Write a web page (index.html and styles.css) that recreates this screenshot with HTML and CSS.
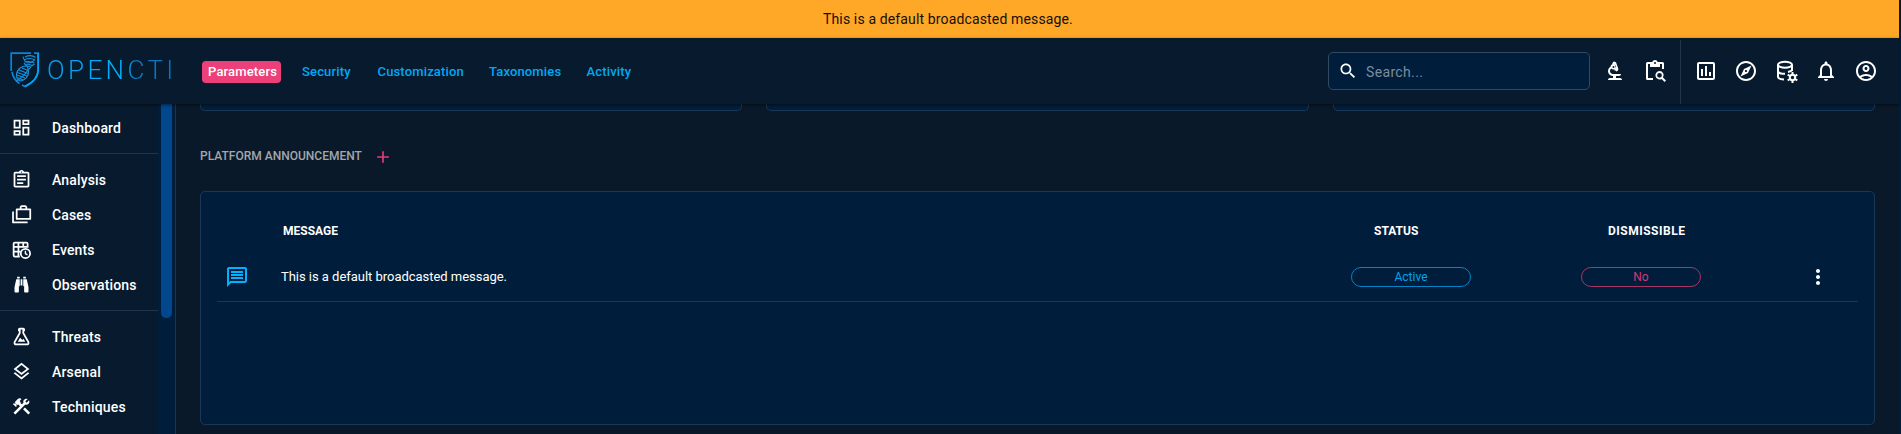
FILE: index.html
```html
<!DOCTYPE html>
<html lang="en">
<head>
<meta charset="utf-8">
<title>OpenCTI - Parameters</title>
<link rel="stylesheet" href="styles.css">
</head>
<body>
<div class="app">
  <div class="banner"><span>This is a default broadcasted message.</span></div>
  <header class="topbar">
    <div class="logo">
      <svg class="logo-mark" width="30" height="36" viewBox="0 0 30 36" fill="none">
        <path d="M21 1.2H1.2V19M2 20c1 5.500 3.500 9 7.500 11.500M12 33l3 1.500c8-4 13.200-8.500 13.200-17V1.200H24" stroke="#0a85d6" stroke-width="1.700"/>
        <path d="M28.200 1.200V17.500c0 8-5 13-13.200 17" stroke="#00a5f5" stroke-width="1.700"/>
        <path d="M15 5c4-2 8-1.500 10.500.5M14.500 7.500c4-1.500 8-1 10.500.5M14.500 10c3.500-1 7-.5 10 1M15 12.500c2.500-.5 5 0 7 1M13 4.500c1.500 7 8 8.500 12 2.500M14 11c3 5 7 4 10.500 1" stroke="#1592dd" stroke-width="1.100"/>
        <path d="M17 14c-5-.5-10 3-10.500 8.500-.3 4 1.500 6 4.500 6.500 4-1 8-5 7.500-9.500-.2-2-.7-4-1.500-5.500z" stroke="#1592dd" stroke-width="1.100"/>
        <path d="M9 18l9 3.500M7.500 20.500l9.500 3.500M7 23l8 3M7.500 25.500l5.500 2.500M12 16l6 2.500M6 29c3-1 4-3 7-5s4-6 8-9" stroke="#1592dd" stroke-width="1.100"/>
      </svg>
      <span class="logo-text">OPENCTI</span>
    </div>
    <nav class="tabs">
      <a class="tab tab-active">Parameters</a>
      <a class="tab t-sec">Security</a>
      <a class="tab t-cus">Customization</a>
      <a class="tab t-tax">Taxonomies</a>
      <a class="tab t-act">Activity</a>
    </nav>
    <div class="search">
      <svg class="i20" viewBox="0 0 24 24"><path d="M15.500 14h-.79l-.28-.27C15.410 12.590 16 11.110 16 9.500 16 5.910 13.090 3 9.500 3S3 5.910 3 9.500 5.910 16 9.500 16c1.610 0 3.090-.59 4.230-1.570l.27.28v.79l5 4.990L20.490 19l-4.990-5zm-6 0C7.010 14 5 11.990 5 9.500S7.010 5 9.500 5 14 7.010 14 9.500 11.990 14 9.500 14z"/></svg>
      <span>Search...</span>
    </div>
    <div class="tools">
      <svg class="i24" viewBox="0 0 24 24"><path d="M5 21c0-1.100.9-2 2-2h3v-2c-2.760 0-5-2.240-5-5 0-2.080 1.280-3.870 3.090-4.620C8.040 7.580 8 7.790 8 8c0 .54.17 1.030.46 1.440C7.590 9.960 7 10.910 7 12c0 1.660 1.340 3 3 3h8c0 1.100-.9 2-2 2h-3v2h4c1.100 0 2 .9 2 2z"/><path fill-rule="evenodd" d="M9.400 5.300 9.100 4.400l.9-.4-.3-.9 1.900-.7.3.9 1-.3 2.700 7.500-.9.300.3.900-1.900.7-.3-.9-1 .3-.6-1.600A2.500 2.500 0 1 1 9.400 5.300zM12.700 9.300l.500.300-1.500-4-.5.200A2.500 2.500 0 0 1 12.700 9.300zM10.500 7a1 1 0 1 0 0 2 1 1 0 0 0 0-2z"/></svg>
      <svg class="i24" viewBox="0 0 24 24"><path d="M10 21H4.500A1.500 1.500 0 0 1 3 19.500v-15A1.500 1.500 0 0 1 4.500 3h4.700a3 3 0 0 1 5.600 0h4.700A1.500 1.500 0 0 1 21 4.500V10h-2V5h-2v3H7V5H5v14h5zM12 3a1 1 0 1 0 0 2 1 1 0 0 0 0-2z"/><path d="M16.500 12a4.200 4.200 0 0 1 3.500 6.500l3 3-1.400 1.400-3-3A4.200 4.200 0 1 1 16.500 12zm0 1.900a2.400 2.400 0 1 0 0 4.800 2.400 2.400 0 0 0 0-4.800z"/></svg>
    </div>
    <div class="tools tools-main">
      <svg class="i24" viewBox="0 0 24 24"><path d="M9 17H7v-7h2v7zm4 0h-2V7h2v10zm4 0h-2v-4h2v4zm2 2H5V5h14v14zm0-16H5c-1.100 0-2 .9-2 2v14c0 1.100.9 2 2 2h14c1.100 0 2-.9 2-2V5c0-1.100-.9-2-2-2z"/></svg>
      <svg class="i24" viewBox="0 0 24 24"><path d="M12 2C6.480 2 2 6.480 2 12s4.480 10 10 10 10-4.480 10-10S17.520 2 12 2zm0 18c-4.410 0-8-3.590-8-8s3.590-8 8-8 8 3.590 8 8-3.590 8-8 8zm-5.500-2.500l7.510-3.490L17.500 6.500 9.990 9.990 6.500 17.500zm5.500-6.600c.61 0 1.100.49 1.100 1.100s-.49 1.100-1.100 1.100-1.100-.49-1.100-1.100.49-1.100 1.100-1.100z"/></svg>
      <svg class="i24" viewBox="0 0 24 24"><g fill="none" stroke="currentColor" stroke-width="2"><ellipse cx="11" cy="5.700" rx="7" ry="3"/><path d="M4 5.700v11.800c0 1.600 2.500 2.900 6 3M18 5.700V12M4 11.800c0 1.700 3 3 7 3M18 11c-.5 1-2 1.600-4 1.900"/><circle cx="18.500" cy="18.500" r="2.700"/><path d="M18.500 13v2.500M18.500 21.500V24M13.700 15.700l2.200 1.300M21.100 20l2.200 1.300M13.700 21.300l2.200-1.300M21.100 17l2.200-1.300"/></g></svg>
      <svg class="i24" viewBox="0 0 24 24"><path d="M12 22c1.100 0 2-.9 2-2h-4c0 1.100.9 2 2 2zm6-6v-5c0-3.070-1.630-5.640-4.500-6.320V4c0-.83-.67-1.500-1.500-1.500s-1.500.67-1.500 1.500v.68C7.640 5.360 6 7.920 6 11v5l-2 2v1h16v-1l-2-2zm-2 1H8v-6c0-2.480 1.510-4.500 4-4.500s4 2.020 4 4.500v6z"/></svg>
      <svg class="i24" viewBox="0 0 24 24"><path d="M12 2C6.480 2 2 6.480 2 12s4.480 10 10 10 10-4.480 10-10S17.520 2 12 2zM7.350 18.500C8.660 17.560 10.260 17 12 17s3.340.56 4.650 1.500c-1.310.94-2.910 1.500-4.650 1.500s-3.340-.56-4.650-1.500zm10.790-1.380C16.450 15.800 14.320 15 12 15s-4.450.8-6.140 2.120C4.700 15.730 4 13.950 4 12c0-4.420 3.580-8 8-8s8 3.580 8 8c0 1.950-.7 3.730-1.860 5.120z"/><path d="M12 6c-1.930 0-3.500 1.570-3.500 3.500S10.070 13 12 13s3.500-1.570 3.500-3.500S13.930 6 12 6zm0 5c-.83 0-1.500-.67-1.500-1.500S11.170 8 12 8s1.500.67 1.500 1.500S12.830 11 12 11z"/></svg>
    </div>
  </header>
  <div class="body">
    <aside class="sidebar">
      <div class="menu">
        <ul class="group">
          <li><svg class="i21" viewBox="0 0 24 24"><path d="M19 5v2h-4V5h4M9 5v6H5V5h4m10 8v6h-4v-6h4M9 17v2H5v-2h4M21 3h-8v6h8V3zM11 3H3v10h8V3zm10 8h-8v10h8V11zm-10 4H3v6h8v-6z"/></svg><span>Dashboard</span></li>
        </ul>
        <ul class="group">
          <li><svg class="i21" viewBox="0 0 24 24"><path d="M7 15h7v2H7zm0-4h10v2H7zm0-4h10v2H7zm12-4h-4.180C14.400 1.840 13.300 1 12 1c-1.300 0-2.400.84-2.820 2H5c-1.100 0-2 .9-2 2v14c0 1.100.9 2 2 2h14c1.100 0 2-.9 2-2V5c0-1.100-.9-2-2-2zm-7-.25c.41 0 .75.34.75.75s-.34.75-.75.75-.75-.34-.75-.75.34-.75.75-.75zM19 19H5V5h14v14z"/></svg><span>Analysis</span></li>
          <li><svg class="i21" viewBox="0 0 24 24"><g fill="none" stroke="currentColor" stroke-width="2" stroke-linejoin="round"><path d="M6.500 6H22v11H6.500zM11 6V3.500L12 2.500h4.500l1 1V6M2.300 8.500V21H19"/></g></svg><span>Cases</span></li>
          <li><svg class="i21" viewBox="0 0 24 24"><g fill="none" stroke="currentColor" stroke-width="2"><path d="M10 20H4.500A1.500 1.500 0 0 1 3 18.500v-13A1.500 1.500 0 0 1 4.500 4h13A1.500 1.500 0 0 1 19 5.500V10M3 9h16M3 14.500h8M8.500 4v16M14 4v6"/><circle cx="16.500" cy="16.500" r="5.300"/><path d="M16.500 13.500v3.300l2.300 1.400" stroke-width="1.600"/></g></svg><span>Events</span></li>
          <li><svg class="i21" viewBox="0 0 24 24"><path d="M11,6H13V13H11V6M9,20A1,1 0 0,1 8,21H5A1,1 0 0,1 4,20V15L6,6H10V13A1,1 0 0,1 9,14V20M10,5H7V3H10V5M15,20V14A1,1 0 0,1 14,13V6H18L20,15V20A1,1 0 0,1 19,21H16A1,1 0 0,1 15,20M14,5V3H17V5H14Z"/></svg><span>Observations</span></li>
        </ul>
        <ul class="group">
          <li><svg class="i21" viewBox="0 0 24 24"><path d="M5,19A1,1 0 0,0 6,20H18A1,1 0 0,0 19,19C19,18.790 18.930,18.590 18.820,18.430L13,8.350V4H11V8.350L5.180,18.430C5.070,18.590 5,18.790 5,19M6,22A3,3 0 0,1 3,19C3,18.400 3.180,17.840 3.500,17.370L9,7.810V6A1,1 0 0,1 8,5V4A2,2 0 0,1 10,2H14A2,2 0 0,1 16,4V5A1,1 0 0,1 15,6V7.810L20.500,17.370C20.820,17.840 21,18.400 21,19A3,3 0 0,1 18,22H6M13,16L14.340,14.660L16.270,18H7.730L10.390,13.390L13,16Z"/></svg><span>Threats</span></li>
          <li><svg class="i21" viewBox="0 0 24 24"><path d="M12,18.540L19.370,12.800L21,14.070L12,21.070L3,14.070L4.620,12.810L12,18.540M12,16L3,9L12,2L21,9L12,16M12,4.530L6.260,9L12,13.470L17.740,9L12,4.530Z"/></svg><span>Arsenal</span></li>
          <li><svg class="i21" viewBox="0 0 24 24"><path d="m13.780 15.170 2.120-2.120 6 6-2.120 2.120zM17.500 10c1.930 0 3.500-1.570 3.500-3.500 0-.58-.16-1.120-.41-1.600l-2.700 2.700-1.490-1.490 2.700-2.700c-.48-.25-1.020-.41-1.600-.41C15.570 3 14 4.570 14 6.500c0 .41.080.8.210 1.160l-1.850 1.850-1.780-1.780.71-.71-1.410-1.410L12 3.490c-1.170-1.170-3.070-1.170-4.240 0L4.220 7.030l1.410 1.410H2.810l-.71.71 3.540 3.540.71-.71V9.150l1.410 1.410.71-.71 1.780 1.780-7.410 7.410 2.120 2.120L16.340 9.790c.36.13.75.21 1.160.21z"/></svg><span>Techniques</span></li>
        </ul>
      </div>
      <div class="track"><div class="thumb"></div></div>
    </aside>
    <main class="content">
      <div class="cards"><div class="card"></div><div class="card"></div><div class="card"></div></div>
      <div class="heading">
        <h4>PLATFORM ANNOUNCEMENT</h4>
        <svg class="plus" width="20" height="20" viewBox="0 0 24 24"><path d="M19 13h-6v6h-2v-6H5v-2h6V5h2v6h6v2z"/></svg>
      </div>
      <section class="paper">
        <div class="grid head">
          <span></span><span class="h-msg">MESSAGE</span><span class="h-sta">STATUS</span><span class="h-dis">DISMISSIBLE</span><span></span>
        </div>
        <div class="grid row">
          <svg class="msg-icon i24" viewBox="0 0 24 24"><path d="M4 4h16v12H5.170L4 17.170V4m0-2c-1.100 0-1.990.9-1.990 2L2 22l4-4h14c1.100 0 2-.9 2-2V4c0-1.100-.9-2-2-2H4zm2 10h12v2H6v-2zm0-3h12v2H6V9zm0-3h12v2H6V6z"/></svg>
          <span class="msg">This is a default broadcasted message.</span>
          <span class="chip">Active</span>
          <span class="chip chip-no">No</span>
          <svg class="i24" viewBox="0 0 24 24"><path d="M12 8c1.100 0 2-.9 2-2s-.9-2-2-2-2 .9-2 2 .9 2 2 2zm0 2c-1.100 0-2 .9-2 2s.9 2 2 2 2-.9 2-2-.9-2-2-2zm0 6c-1.100 0-2 .9-2 2s.9 2 2 2 2-.9 2-2-.9-2-2-2z"/></svg>
        </div>
      </section>
    </main>
  </div>
</div>
</body>
</html>
```
FILE: styles.css
```css
* { box-sizing: border-box; }
body {
  margin: 0;
  height: 434px;
  overflow: hidden;
  background: #001e3c;
  color: #fff;
  font-family: Roboto, "Liberation Sans", sans-serif;
}
svg { display: block; flex: none; fill: currentColor; }
.logo-mark { fill: none; }
.i20 { width: 20px; height: 20px; }
.i21 { width: 21px; height: 21px; }
.i24 { width: 24px; height: 24px; }

.app { width: 1899px; height: 434px; display: flex; flex-direction: column; background: #0a1929; }
.banner {
  flex: none;
  height: 38px;
  background: #ffa726;
  color: #14100a;
  font-size: 14px;
  letter-spacing: 0.14px;
  line-height: 38px;
  padding-left: 823px;
  white-space: nowrap;
}

.topbar {
  position: relative;
  flex: none;
  height: 66px;
  display: flex;
  align-items: center;
  background: #071a2e;
  box-shadow: 0 1px 3px rgba(0, 0, 0, 0.55);
}
.logo { width: 202px; display: flex; align-items: center; padding: 0 0 2px 10px; }
.logo-text {
  margin-left: 7px;
  font-size: 26px;
  font-weight: 300;
  line-height: 36px;
  letter-spacing: 3.4px;
  background: linear-gradient(90deg, #0a9be8 0, #00b1ff 58%, #0b78c4 68%, #0b74be 100%);
  background-clip: text;
  color: transparent;
}
.tabs { display: flex; flex: 1; font-size: 13px; letter-spacing: 0.15px; font-weight: 500; color: #00a8f3; padding-top: 2px; }
.tab { height: 22px; line-height: 22px; white-space: nowrap; }
.tab-active { width: 79px; padding-left: 6px; background: #ec407a; color: #fff; border-radius: 4px; margin-right: 21px; }
.t-sec { width: 75.5px; }
.t-cus { width: 111.5px; }
.t-tax { width: 97.5px; }
.search {
  width: 262px;
  height: 38px;
  display: flex;
  align-items: center;
  padding-left: 9px;
  border: 1px solid #33495f;
  border-radius: 5px;
  background: #001e3c;
  font-size: 14px;
  letter-spacing: 0.35px;
  margin-right: 13px;
}
.search svg { margin-right: 8px; }
.search span { color: #7d8c9c; padding-top: 2px; }
.tools { display: flex; gap: 16px; }
.tools-main { height: 64px; align-items: center; align-self: flex-end; margin-left: 13px; padding: 0 21px 2px 13px; border-left: 1px solid #223548; }

.body { display: flex; flex: 1; min-height: 0; }
.sidebar { width: 176px; flex: none; display: flex; border-right: 1px solid #1f3349; background: #071a2e; }
.menu { width: 158px; }
.group { margin: 0; padding: 8px 0; list-style: none; border-bottom: 1px solid #21344a; }
.group:first-child { padding: 6px 0 8px; }
.group:last-child { border-bottom: 0; }
.group li { display: flex; align-items: center; height: 35px; padding-left: 11px; font-size: 14px; font-weight: 500; }
.group span { margin-left: 20px; letter-spacing: 0.15px; }
.track { width: 17px; padding: 0 3px; background: #001e3c; }
.thumb { width: 11px; height: 214px; background: #00478d; border-radius: 0 0 5px 5px; }

.content { flex: 1; padding: 0 24px; }
.cards { display: grid; grid-template-columns: repeat(3, 1fr); gap: 24px; }
.card { height: 7px; background: #001e3c; border: 1px solid #1c3753; border-top: 0; border-radius: 0 0 5px 5px; }
.heading { display: flex; align-items: center; height: 80px; padding-top: 11px; }
.heading h4 { width: 173px; margin: 0 0 2px; font-size: 12px; font-weight: 500; line-height: 16px; color: #a3a7ab; white-space: nowrap; }
.plus { color: #e03c76; }
.paper { height: 234px; background: #001e3c; border: 1px solid #1c3753; border-radius: 5px; padding: 15px 16px 0; }
.grid { display: grid; grid-template-columns: 64px 1070px 230px 225px 1fr; align-items: center; }
.head { height: 48px; font-size: 12px; font-weight: 700; }
.h-msg { padding-left: 2px; }
.h-sta { padding-left: 23px; }
.h-dis { padding-left: 27px; letter-spacing: 0.5px; }
.row { height: 47px; padding-bottom: 2px; border-bottom: 1px solid #1c3753; }
.row .msg { font-size: 13px; letter-spacing: -0.03px; padding-bottom: 1px; }
.msg-icon { margin-left: 8px; color: #00b1ff; }
.chip { width: 120px; height: 20px; border: 1px solid #0284c7; border-radius: 10px; color: #00a3ee; font-size: 12px; line-height: 18px; text-align: center; }
.chip-no { border-color: #a83566; color: #cf3b72; }
```
